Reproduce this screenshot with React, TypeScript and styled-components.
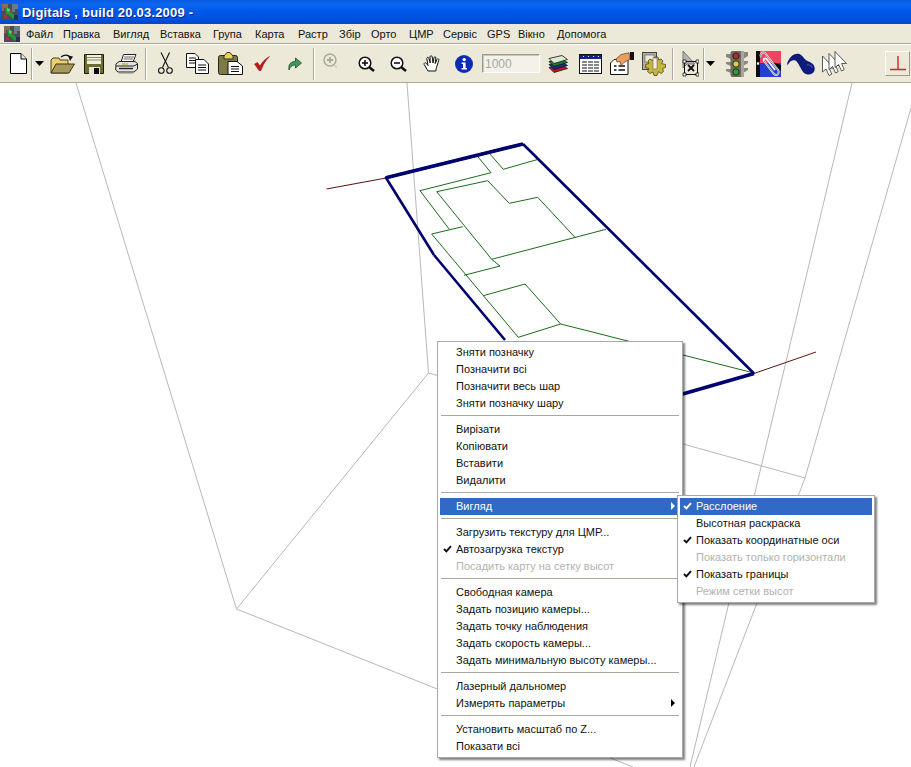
import styled, { createGlobalStyle } from "styled-components";

const GlobalStyle = createGlobalStyle`
  html, body { margin: 0; padding: 0; background: #fff; }
  body { font-family: "Liberation Sans", Arial, sans-serif; font-size: 11px; }
`;

type MenuEntry =
  | "sep"
  | { label: string; checked?: boolean; disabled?: boolean; active?: boolean; sub?: boolean };

const MENU_ITEMS: [string, number][] = [
  ["Файл", 37],
  ["Правка", 50],
  ["Вигляд", 47],
  ["Вставка", 53],
  ["Група", 42],
  ["Карта", 43],
  ["Растр", 41],
  ["Збір", 32],
  ["Орто", 38],
  ["ЦМР", 34],
  ["Сервіс", 44],
  ["GPS", 31],
  ["Вікно", 39],
  ["Допомога", 60],
];

const CONTEXT: MenuEntry[] = [
  { label: "Зняти позначку" },
  { label: "Позначити всі" },
  { label: "Позначити весь шар" },
  { label: "Зняти позначку шару" },
  "sep",
  { label: "Вирізати" },
  { label: "Копіювати" },
  { label: "Вставити" },
  { label: "Видалити" },
  "sep",
  { label: "Вигляд", active: true, sub: true },
  "sep",
  { label: "Загрузить текстуру для ЦМР..." },
  { label: "Автозагрузка текстур", checked: true },
  { label: "Посадить карту на сетку высот", disabled: true },
  "sep",
  { label: "Свободная камера" },
  { label: "Задать позицию камеры..." },
  { label: "Задать точку наблюдения" },
  { label: "Задать скорость камеры..." },
  { label: "Задать минимальную высоту камеры..." },
  "sep",
  { label: "Лазерный дальномер" },
  { label: "Измерять параметры", sub: true },
  "sep",
  { label: "Установить масштаб по Z..." },
  { label: "Показати всі" },
];

const SUBMENU: MenuEntry[] = [
  { label: "Расслоение", checked: true, active: true },
  { label: "Высотная раскраска" },
  { label: "Показать координатные оси", checked: true },
  { label: "Показать только горизонтали", disabled: true },
  { label: "Показать границы", checked: true },
  { label: "Режим сетки высот", disabled: true },
];

const GREY_LINES = [
  "76,83 236.5,609 633,767",
  "407,83 428.5,373 236.5,609",
  "428.5,373 805,478",
  "852,83 690,767",
  "911,108 805,478 694,767",
];

const GREEN_LINES = [
  "477.3,156 491,172.7 420,190.7 449.3,229.3",
  "489.3,153.3 503.3,169.3 538.3,159.3",
  "436.7,191.7 487.7,180.7 509.3,203.3 537.7,197.3 575,237.3",
  "436.7,191.7 491.7,259.3 606,229.3",
  "491.7,259.3 500,266 464,275.3",
  "431.7,234 462.7,226.7",
  "431.7,234 518.3,337.3 560.7,324 754,373",
  "483.3,295.7 525,284 560.7,324",
];

function Menu({ items }: { items: MenuEntry[] }) {
  return (
    <>
      {items.map((item, index) =>
        item === "sep" ? (
          <MenuSep key={index} />
        ) : (
          <MenuRow key={index} $active={item.active} $disabled={item.disabled}>
            <CheckSlot>
              {item.checked && (
                <svg width="9" height="8" viewBox="0 0 9 8">
                  <path d="M1 4 L3.4 6.4 L8 1.2" fill="none" stroke="currentColor" strokeWidth="2" />
                </svg>
              )}
            </CheckSlot>
            <MenuLabel>{item.label}</MenuLabel>
            {item.sub && <SubArrow $active={item.active} />}
          </MenuRow>
        )
      )}
    </>
  );
}

function AppGlyph() {
  return (
    <svg width="16" height="16" viewBox="0 0 16 16">
      <rect width="16" height="16" fill="#4a4a58" />
      <path d="M0 0h6v4H2v3H0z" fill="#8a6a5a" />
      <path d="M10 0h6v5h-3v3h-3z" fill="#6a7a8a" />
      <path d="M3 3l5 2 2 4 3 3-2 3-4-4-3-1z" fill="#1f9a3a" />
      <path d="M8 6l2 1v2l-2-1zM2 11h3v3H2z" fill="#c02828" />
      <path d="M12 11h4v5h-4z" fill="#2a3050" />
      <path d="M5 4l3 1-1 3-2-1z" fill="#55d060" />
    </svg>
  );
}

function NewIcon() {
  return (
    <svg width="17" height="21" viewBox="0 0 17 21">
      <path d="M.5.5H11L16.5 6V20.5H.5Z" fill="#fff" stroke="#000" />
      <path d="M11 .5V6H16.5" fill="#e8e8e8" stroke="#000" />
    </svg>
  );
}

function DropArrow() {
  return (
    <svg width="9" height="5" viewBox="0 0 9 5">
      <path d="M0 0H9L4.5 5Z" fill="#000" />
    </svg>
  );
}

function OpenIcon() {
  return (
    <svg width="25" height="20" viewBox="0 0 25 20">
      <path d="M1 6L3 4H9L10 6H18V19H1Z" fill="#e8cf70" stroke="#4a4520" />
      <path d="M1 19L6 10H24.5L19 19Z" fill="#a8985a" stroke="#3a3518" />
      <path d="M11 3C14 .5 18 .5 20 3" fill="none" stroke="#111" strokeWidth="1.2" />
      <path d="M18 1.5L23 2.5L20 7Z" fill="#111" />
    </svg>
  );
}

function SaveIcon() {
  return (
    <svg width="20" height="20" viewBox="0 0 20 20">
      <path d="M.5.5H19.5V19.5H.5Z" fill="#6e6e2c" stroke="#1c1c10" />
      <rect x="3" y="1" width="14" height="9" fill="#f0f0e0" />
      <path d="M3 3.5H17M3 6H17" stroke="#8a8a70" />
      <rect x="5" y="13" width="11" height="7" fill="#e6e6d4" />
      <rect x="10" y="14" width="5" height="6" fill="#0c0c0c" />
    </svg>
  );
}

function PrintIcon() {
  return (
    <svg width="23" height="20" viewBox="0 0 23 20">
      <path d="M6 8L8.5 .5H21L18 8Z" fill="#fff" stroke="#222" />
      <path d="M9 3H19M8.5 5H18" stroke="#666" />
      <path d="M1 10L4 7.5H20L22.5 9.5V15L19 18H3L.7 16Z" fill="#e4e4dc" stroke="#222" />
      <path d="M1 12H19L22.5 10" fill="none" stroke="#222" />
      <path d="M4 14.5H18" stroke="#222" strokeWidth="1.4" />
      <path d="M7 10H13" stroke="#c8b840" strokeWidth="1.4" />
      <path d="M4 18H18V19.5H4Z" fill="#888" />
    </svg>
  );
}

function CutIcon() {
  return (
    <svg width="15" height="23" viewBox="0 0 15 23" fill="none" stroke="#111" strokeWidth="1.1">
      <path d="M3 .5L10.5 15.5" />
      <path d="M11.5 .5L4.5 15.5" />
      <circle cx="3.3" cy="18.5" r="2.8" />
      <circle cx="11.5" cy="18.5" r="2.8" />
    </svg>
  );
}

function CopyIcon() {
  return (
    <svg width="23" height="21" viewBox="0 0 23 21" stroke="#111">
      <path d="M.5.5H9L12.5 4V14.5H.5Z" fill="#fff" />
      <path d="M3 5H10M3 7.5H10M3 10H10" strokeWidth="1" />
      <path d="M9.5 6.5H18L22.5 11V20.5H9.5Z" fill="#fff" />
      <path d="M12 12H20M12 14.5H20M12 17H20" strokeWidth="1" />
    </svg>
  );
}

function PasteIcon() {
  return (
    <svg width="25" height="23" viewBox="0 0 25 23">
      <rect x=".5" y="3.5" width="19" height="19" rx="2" fill="#7d7a45" stroke="#26261a" />
      <path d="M6 4L9 .5H12L15 4V7H6Z" fill="#e8d24a" stroke="#333" />
      <path d="M10 9.5H19L24.5 14V22.5H10Z" fill="#fff" stroke="#111" />
      <path d="M13 14.5H21M13 17H21M13 19.5H21" stroke="#111" />
    </svg>
  );
}

function CheckIcon() {
  return (
    <svg width="16" height="15" viewBox="0 0 16 15">
      <path d="M.5 8L3.5 6.5L6 10C8 6 11 3 15.5 .5C11 5 9 9 7 14.5H5Z" fill="#c01818" stroke="#7a1010" strokeWidth=".5" />
    </svg>
  );
}

function RedoIcon() {
  return (
    <svg width="14" height="14" viewBox="0 0 14 14">
      <path d="M1 13C0 7 3 4.5 7.5 4.5V1L13.5 6L7.5 11V8C5 8 2.5 9 1 13Z" fill="#3f9a5a" stroke="#1d4d2c" strokeWidth=".8" />
    </svg>
  );
}

function ZoomIcon({ sign }: { sign: "plus" | "minus" }) {
  return (
    <svg width="17" height="16" viewBox="0 0 17 16">
      <circle cx="7" cy="7" r="5.8" fill="#fff" stroke="#111" strokeWidth="1.5" />
      <path d="M4 7H10" stroke="#111" strokeWidth="1.6" />
      {sign === "plus" && <path d="M7 4V10" stroke="#111" strokeWidth="1.6" />}
      <path d="M11 11L16 15" stroke="#111" strokeWidth="2.6" />
    </svg>
  );
}

function GreyPlusIcon() {
  return (
    <svg width="15" height="15" viewBox="0 0 15 15">
      <circle cx="7" cy="7" r="6" fill="#ece9d8" stroke="#a8a89c" strokeWidth="1.4" />
      <path d="M4 7H10M7 4V10" stroke="#a8a89c" strokeWidth="1.8" />
      <path d="M11 12L14 14.5" stroke="#d0cdbc" strokeWidth="1.4" />
    </svg>
  );
}

function HandIcon() {
  return (
    <svg width="18" height="17" viewBox="0 0 18 17">
      <path
        d="M5 16L1.2 9.5C.6 8 2.4 7.2 3.4 8.4L5 10.5L3.8 3.6C3.6 2.2 5.4 1.8 5.8 3.2L7.2 8L7 1.8C7 .4 9 .4 9.2 1.8L10 8L11 2.6C11.3 1.2 13 1.6 12.8 3L12.2 8.6L14 4.4C14.6 3.2 16.2 3.8 15.8 5.2L13.6 12.2C13.2 13.8 12.8 15 12.8 16Z"
        fill="#fff"
        stroke="#111"
      />
    </svg>
  );
}

function InfoIcon() {
  return (
    <svg width="18" height="18" viewBox="0 0 18 18">
      <circle cx="9" cy="9" r="9" fill="#0b2bb5" />
      <circle cx="9.2" cy="4.6" r="1.7" fill="#fff" />
      <path d="M6.6 7.4H10.6V13H12V14.6H6.6V13H8V9H6.6Z" fill="#fff" />
    </svg>
  );
}

function LayersIcon() {
  return (
    <svg width="20" height="18" viewBox="0 0 20 18" stroke="#111" strokeWidth=".8">
      <path d="M1 12.5L14 10L19.5 13.5L6 17.5Z" fill="#c01820" />
      <path d="M1 9.5L14 7L19.5 10.5L6 14.5Z" fill="#1c2c90" />
      <path d="M1 6.5L14 4L19.5 7.5L6 11.5Z" fill="#1f7a2c" />
      <path d="M1 3.5L14 .5L19.5 4.5L6 8.5Z" fill="#dfe8d8" />
    </svg>
  );
}

function TableIcon() {
  return (
    <svg width="23" height="20" viewBox="0 0 23 20">
      <rect x=".5" y=".5" width="22" height="19" fill="#fff" stroke="#111" />
      <rect x="1" y="1" width="21" height="4" fill="#16208a" />
      <path d="M4 2.5H5M9 2.5H10M14 2.5H15M19 2.5H20" stroke="#dfe4ff" />
      <path d="M3 8H20M3 11H20M3 14H20M3 17H20" stroke="#111" />
      <path d="M8.5 7V18M14.5 7V18" stroke="#fff" />
    </svg>
  );
}

function HandCardIcon() {
  return (
    <svg width="25" height="23" viewBox="0 0 25 23">
      <path d="M4 7.5H18V22.5H.5V11Z" fill="#fff" stroke="#111" />
      <path d="M4 14H6.5M8.5 14H15M4 18H6.5M8.5 18H15" stroke="#111" strokeWidth="1.6" />
      <path d="M6 7L11 2.5L19 .8L20 7L14 10.5L11 13.5L10 9.5L7 10Z" fill="#e8a060" stroke="#6a3a18" strokeWidth=".7" />
      <rect x="20" y="0" width="4" height="8" fill="#111" />
    </svg>
  );
}

function GearIcon() {
  return (
    <svg width="24" height="24" viewBox="0 0 24 24">
      <rect x=".5" y=".5" width="14" height="17" fill="#b0aca0" stroke="#444" />
      <rect x="3" y="3" width="9" height="7" fill="#ece9d8" stroke="#555" strokeWidth=".6" />
      <path
        d="M13 5L16 5L16.5 8L19 7L21 9L19.5 11.5L23.5 12.5V15.5L20.5 16.5L21.5 19.5L19 21.5L16.5 19.5L15 23.5H12L11 20L8 21.5L5.5 19.5L7 16.5L3.5 15.5V12.5L7 11.5L6 9L8 7L10.5 8.5Z"
        fill="#c8b63a"
        stroke="#4d4614"
        strokeWidth=".8"
      />
      <rect x="11" y="6" width="4" height="11" fill="#f2f0e4" stroke="#666" strokeWidth=".6" />
    </svg>
  );
}

function SelectIcon() {
  return (
    <svg width="17" height="26" viewBox="0 0 17 26">
      <path d="M1 0V17L5 13L8 13H13Z" fill="#b4b4b4" stroke="#777" />
      <rect x="2.5" y="10.5" width="13" height="13" fill="none" stroke="#111" />
      <path d="M6 14L12 20M12 14L6 20" stroke="#111" strokeWidth="1.8" />
      <path d="M1 9h3v3H1zM14 9h3v3h-3zM1 22h3v3H1zM14 22h3v3h-3z" fill="#fff" stroke="#111" strokeWidth=".8" />
    </svg>
  );
}

function TrafficIcon() {
  return (
    <svg width="22" height="26" viewBox="0 0 22 26">
      <path d="M0 3H5V8L0 6ZM0 11H5V15L0 13ZM0 18H5V22L0 20ZM22 1H17V8L22 5ZM22 10H17V15L22 12ZM22 17H17V22L22 19Z" fill="#8a887c" />
      <rect x="4.5" y="0" width="13" height="26" rx="2" fill="#6e6c62" />
      <rect x="15" y="0" width="3" height="26" fill="#a8a698" />
      <circle cx="10" cy="5" r="3.2" fill="#b02828" stroke="#2c2c28" />
      <circle cx="10" cy="13" r="3.2" fill="#d8d040" stroke="#2c2c28" />
      <circle cx="10" cy="21" r="3.2" fill="#2ca02c" stroke="#2c2c28" />
    </svg>
  );
}

function ClipIcon() {
  return (
    <svg width="25" height="26" viewBox="0 0 25 26">
      <rect width="25" height="26" fill="#f04460" />
      <rect y="14" width="25" height="12" fill="#2440d4" />
      <path d="M0 12H25V14H16V26H0Z" fill="#2440d4" />
      <path d="M0 0H4V26H0ZM4 11H16L25 20V14L16 11Z" fill="#0c0c0c" />
      <path d="M5 6C3.5 3 6 .5 9 2L22 19C24 22 21 25.5 18 23L8 10C7 8 9 6.5 10.5 8L19 19" fill="none" stroke="#fff" strokeWidth="1.8" />
      <path d="M5 6C3.5 3 6 .5 9 2L22 19C24 22 21 25.5 18 23L8 10" fill="none" stroke="#222" strokeWidth=".5" />
      <rect x=".5" y="11" width="3" height="3" fill="#fff" stroke="#111" strokeWidth=".7" />
    </svg>
  );
}

function WaveIcon() {
  return (
    <svg width="28" height="22" viewBox="0 0 28 22">
      <path d="M0 11C2 4 7 0 11.5 .8C16 2 17 7 21.5 8.6C26 10 28.5 13.5 27.5 17.5C26 22 20 23 16.5 19.5C13.5 16 12 10 8.5 7.5C5.5 6.5 2.5 8 .8 12Z" fill="#0e1a7c" />
      <path d="M20 12C23 11.5 25 13 25 15" fill="none" stroke="#3a4ab0" strokeWidth="1.4" />
    </svg>
  );
}

function CursorsIcon() {
  const arrow = "M0 0V16L3.6 13L6.5 19.5L9.2 18.2L6.6 12H11.5Z";
  return (
    <svg width="25" height="25" viewBox="0 0 25 25">
      <path d={arrow} transform="translate(.5 5)" fill="#fff" stroke="#333" strokeWidth=".8" />
      <path d={arrow} transform="translate(7 2.5)" fill="#fff" stroke="#333" strokeWidth=".8" />
      <path d={arrow} transform="translate(13 .5)" fill="#fff" stroke="#333" strokeWidth=".8" />
    </svg>
  );
}

function PerpIcon() {
  return (
    <svg width="16" height="15" viewBox="0 0 16 15">
      <path d="M8 0V13M0 13.5H16" stroke="#d02828" strokeWidth="1.4" />
    </svg>
  );
}

export default function App() {
  return (
    <Page>
      <GlobalStyle />
      <TitleBar>
        <AppGlyph />
        <TitleText>Digitals , build 20.03.2009 -</TitleText>
      </TitleBar>
      <MenuBar>
        <AppGlyph />
        <MenuItems>
          {MENU_ITEMS.map(([name, width]) => (
            <MenuItem key={name} $w={width}>
              {name}
            </MenuItem>
          ))}
        </MenuItems>
      </MenuBar>
      <Toolbar>
        <Tool $gap={0}><NewIcon /></Tool>
        <ToolSep $gap={4} />
        <Tool $gap={2}><DropArrow /></Tool>
        <Tool $gap={6}><OpenIcon /></Tool>
        <Tool $gap={9}><SaveIcon /></Tool>
        <Tool $gap={11}><PrintIcon /></Tool>
        <ToolSep $gap={7} />
        <Tool $gap={11}><CutIcon /></Tool>
        <Tool $gap={13}><CopyIcon /></Tool>
        <Tool $gap={9}><PasteIcon /></Tool>
        <Tool $gap={11}><CheckIcon /></Tool>
        <Tool $gap={18}><RedoIcon /></Tool>
        <ToolSep $gap={11} />
        <Tool $gap={8} $lift={7}><GreyPlusIcon /></Tool>
        <Tool $gap={20}><ZoomIcon sign="plus" /></Tool>
        <Tool $gap={15}><ZoomIcon sign="minus" /></Tool>
        <Tool $gap={16}><HandIcon /></Tool>
        <Tool $gap={14}><InfoIcon /></Tool>
        <ScaleInput $gap={9}>1000</ScaleInput>
        <Tool $gap={8}><LayersIcon /></Tool>
        <Tool $gap={11}><TableIcon /></Tool>
        <Tool $gap={8}><HandCardIcon /></Tool>
        <Tool $gap={7}><GearIcon /></Tool>
        <ToolSep $gap={6} />
        <Tool $gap={8}><SelectIcon /></Tool>
        <ToolSep $gap={4} />
        <Tool $gap={1}><DropArrow /></Tool>
        <Tool $gap={11}><TrafficIcon /></Tool>
        <Tool $gap={8}><ClipIcon /></Tool>
        <Tool $gap={6}><WaveIcon /></Tool>
        <Tool $gap={7}><CursorsIcon /></Tool>
        <RaisedButton $gap={38}><PerpIcon /></RaisedButton>
        <RaisedButton $gap={1} $cut><PerpIcon /></RaisedButton>
      </Toolbar>
      <Viewport>
        <Scene viewBox="0 83 911 684">
          <g fill="none" stroke="#b8b8b8" strokeWidth="1">
            {GREY_LINES.map((points) => (
              <polyline key={points} points={points} />
            ))}
          </g>
          <g fill="none" stroke="#5a1414" strokeWidth="1">
            <polyline points="326.5,189 386,178" />
            <polyline points="754,373.5 816,352" />
          </g>
          <g fill="none" stroke="#1c6b1c" strokeWidth="1">
            {GREEN_LINES.map((points) => (
              <polyline key={points} points={points} />
            ))}
          </g>
          <g fill="none" stroke="#000070" strokeLinejoin="round">
            <polyline points="434,255 386,177.7 523,144" strokeWidth="2.6" />
            <polyline points="386,177.7 523,144" strokeWidth="3.6" />
            <polyline points="523,144 754,373.5" strokeWidth="2.6" />
            <polyline points="754,373.5 620,412" strokeWidth="3.8" />
            <polyline points="434,255 505,340" strokeWidth="2.6" />
          </g>
        </Scene>
        <ContextMenu>
          <Menu items={CONTEXT} />
        </ContextMenu>
        <SubMenu>
          <Menu items={SUBMENU} />
        </SubMenu>
      </Viewport>
    </Page>
  );
}

const Page = styled.div`
  width: 911px;
  height: 767px;
  display: flex;
  flex-direction: column;
  overflow: hidden;
  background: #fff;
`;

const TitleBar = styled.div`
  height: 24px;
  flex: none;
  display: flex;
  align-items: center;
  padding-left: 2px;
  gap: 4px;
  background: linear-gradient(
    180deg,
    #0a58dc 0%,
    #0a68f2 18%,
    #0058e8 45%,
    #0055e5 70%,
    #0048cc 100%
  );
`;

const TitleText = styled.div`
  color: #fff;
  font-family: "Liberation Sans", Arial, sans-serif;
  font-weight: 700;
  font-size: 13px;
  letter-spacing: 0.2px;
  text-shadow: 1px 1px #0f1f8f;
  white-space: nowrap;
`;

const MenuBar = styled.div`
  height: 19px;
  flex: none;
  display: flex;
  align-items: center;
  padding-left: 4px;
  background: #ece9d8;
  border-bottom: 1px solid #aca899;
`;

const MenuItems = styled.div`
  display: flex;
`;

const MenuItem = styled.div<{ $w: number }>`
  width: ${(p) => p.$w}px;
  padding-left: 6px;
  box-sizing: border-box;
  color: #111;
  font-size: 11px;
  white-space: nowrap;
`;

const Toolbar = styled.div`
  height: 37px;
  flex: none;
  display: flex;
  align-items: center;
  padding-left: 10px;
  background: #ece9d8;
  border-top: 1px solid #fff;
  border-bottom: 1px solid #aca899;
`;

const Tool = styled.div<{ $gap: number; $lift?: number }>`
  flex: none;
  display: flex;
  margin-left: ${(p) => p.$gap}px;
  margin-bottom: ${(p) => p.$lift ?? 0}px;
`;

const ToolSep = styled.div<{ $gap: number }>`
  flex: none;
  width: 1px;
  height: 32px;
  margin-left: ${(p) => p.$gap}px;
  background: #aca899;
  border-right: 1px solid #fff;
`;

const ScaleInput = styled.div<{ $gap: number }>`
  flex: none;
  width: 54px;
  height: 16px;
  margin-left: ${(p) => p.$gap}px;
  padding: 1px 0 0 2px;
  display: flex;
  align-items: center;
  color: #a6a6a0;
  font-size: 12px;
  background: #f4f2e8;
  border: 1px solid;
  border-color: #9c9a8c #fff #fff #9c9a8c;
  box-shadow: inset 1px 1px 0 #c8c6b8;
`;

const RaisedButton = styled.div<{ $gap: number; $cut?: boolean }>`
  flex: none;
  width: 23px;
  height: 23px;
  margin-left: ${(p) => p.$gap}px;
  display: flex;
  align-items: center;
  justify-content: ${(p) => (p.$cut ? "flex-start" : "center")};
  background: #ece9d8;
  border: 1px solid;
  border-color: #fff #9c9a8c #9c9a8c #fff;
`;

const Viewport = styled.div`
  flex: 1;
  position: relative;
`;

const Scene = styled.svg`
  display: block;
  width: 100%;
  height: 100%;
`;

const Popup = styled.div`
  position: absolute;
  box-sizing: border-box;
  padding: 2px;
  background: #fff;
  border: 1px solid #a8a8a8;
  box-shadow: 2px 2px 2px rgba(0, 0, 0, 0.5);
`;

const ContextMenu = styled(Popup)`
  left: 437px;
  top: 258px;
  width: 246px;
`;

const SubMenu = styled(Popup)`
  left: 677px;
  top: 412px;
  width: 198px;
`;

const MenuRow = styled.div<{ $active?: boolean; $disabled?: boolean }>`
  height: 17px;
  box-sizing: border-box;
  display: flex;
  align-items: center;
  padding: 0 5px 2px 0;
  font-size: 11px;
  white-space: nowrap;
  color: ${(p) => (p.$active ? "#fff" : p.$disabled ? "#b2b2b0" : "#111")};
  background: ${(p) => (p.$active ? "#316ac5" : "transparent")};
`;

const CheckSlot = styled.span`
  flex: none;
  width: 16px;
  display: flex;
  justify-content: center;
  padding-right: 1px;
  box-sizing: border-box;
`;

const MenuLabel = styled.span`
  flex: 1;
`;

const SubArrow = styled.span<{ $active?: boolean }>`
  width: 0;
  height: 0;
  border-left: 4px solid ${(p) => (p.$active ? "#fff" : "#000")};
  border-top: 4px solid transparent;
  border-bottom: 4px solid transparent;
`;

const MenuSep = styled.div`
  height: 1px;
  margin: 3px 1px 5px;
  background: #aca899;
`;
